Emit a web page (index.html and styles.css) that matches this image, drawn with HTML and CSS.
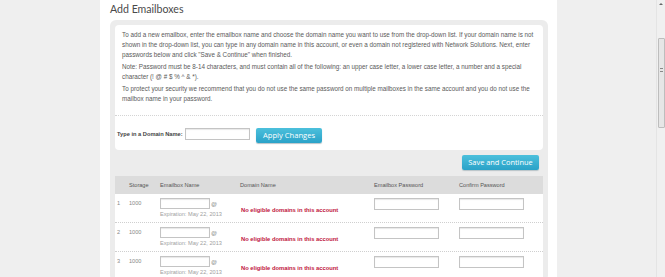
FILE: index.html
```html
<!DOCTYPE html>
<html>
<head>
<meta charset="utf-8">
<link rel="stylesheet" href="styles.css">
</head>
<body>
<div class="page">
  <div class="side-left"></div>
  <div class="main">
    <h1 class="title">Add Emailboxes</h1>
    <div class="panel">
      <div class="box">
        <p class="para">To add a new emailbox, enter the emailbox name and choose the domain name you want to use from the drop-down list. If your domain name is not shown in the drop-down list, you can type in any domain name in this account, or even a domain not registered with Network Solutions. Next, enter passwords below and click "Save &amp; Continue" when finished.</p>
        <p class="para">Note: Password must be 8-14 characters, and must contain all of the following: an upper case letter, a lower case letter, a number and a special character (! @ # $ % ^ &amp; *).</p>
        <p class="para">To protect your security we recommend that you do not use the same password on multiple mailboxes in the same account and you do not use the mailbox name in your password.</p>
        <div class="domain-row">
          <span class="domain-label">Type in a Domain Name:</span>
          <span class="field field-domain"></span>
          <span class="btn btn-apply">Apply Changes</span>
        </div>
      </div>
      <div class="actions">
        <span class="btn btn-save">Save and Continue</span>
      </div>
      <div class="table">
        <div class="thead">
          <span></span>
          <span>Storage</span>
          <span>Emailbox Name</span>
          <span>Domain Name</span>
          <span>Emailbox Password</span>
          <span>Confirm Password</span>
        </div>
        <div class="trow">
          <span class="num">1</span>
          <span class="num">1000</span>
          <div class="namecell"><div class="nameline"><span class="field field-name"></span><span class="at">@</span></div><span class="exp">Expiration: May 22, 2013</span></div>
          <span class="nodomain">No eligible domains in this account</span>
          <span class="field field-pw"></span>
          <span class="field field-pw"></span>
        </div>
        <div class="trow">
          <span class="num">2</span>
          <span class="num">1000</span>
          <div class="namecell"><div class="nameline"><span class="field field-name"></span><span class="at">@</span></div><span class="exp">Expiration: May 22, 2013</span></div>
          <span class="nodomain">No eligible domains in this account</span>
          <span class="field field-pw"></span>
          <span class="field field-pw"></span>
        </div>
        <div class="trow">
          <span class="num">3</span>
          <span class="num">1000</span>
          <div class="namecell"><div class="nameline"><span class="field field-name"></span><span class="at">@</span></div><span class="exp">Expiration: May 22, 2013</span></div>
          <span class="nodomain">No eligible domains in this account</span>
          <span class="field field-pw"></span>
          <span class="field field-pw"></span>
        </div>
      </div>
    </div>
  </div>
  <div class="side-right"></div>
  <div class="scrollbar">
    <div class="arrow"></div>
    <div class="thumb"><div class="grip"></div></div>
  </div>
</div>
</body>
</html>
```

FILE: styles.css
```css
* { box-sizing: border-box; }
html, body { margin: 0; padding: 0; }
body {
  font-family: "Liberation Sans", Arial, sans-serif;
  color: #555;
  overflow: hidden;
}
.page {
  display: flex;
  width: 665px;
  height: 277px;
  background: #efefef;
}
.side-left { width: 100px; background: #efefef; }
.main {
  width: 457px;
  background: #fff;
  padding: 0 9px 0 10px;
}
.side-right { flex: 1; background: #efefef; }
.scrollbar {
  width: 9px;
  background: #f0f0f0;
  border-left: 1px solid #e4e4e4;
  display: flex;
  flex-direction: column;
  align-items: center;
}
.arrow {
  margin-top: 3px;
  width: 0; height: 0;
  border-left: 2px solid transparent;
  border-right: 2px solid transparent;
  border-bottom: 2px solid #666;
}
.thumb {
  margin-top: 33px;
  width: 7px;
  height: 90px;
  background: #e6e6e6;
  border: 1px solid #bdbdbd;
  border-radius: 1px;
  display: flex;
  justify-content: center;
  padding-top: 29px;
}
.grip {
  width: 3px; height: 4px;
  border-top: 1px solid #888;
  border-bottom: 1px solid #888;
}
.title {
  margin: 0;
  padding: 2px 0 0 0;
  height: 20px;
  font-family: Lato, "Open Sans", sans-serif;
  font-weight: normal;
  font-size: 10.6px;
  line-height: 14px;
  color: #4a4a4a;
}
.panel {
  background: #ececec;
  border-radius: 6px;
  padding: 5px 5px 0 5px;
}
.box {
  background: #fff;
  border-radius: 4px;
  padding: 5px 0 0 0;
  height: 125px;
}
.para {
  margin: 0 0 1.5px 0;
  padding: 0 9px 0 7px;
  font-size: 6.3px;
  line-height: 10.2px;
  color: #5a5a5a;
}
.domain-row {
  margin-top: 11px;
  border-top: 1px dotted #d4d4d4;
  display: flex;
  align-items: center;
  padding: 9px 0 0 2px;
}
.domain-label {
  font-size: 5.7px;
  font-weight: bold;
  color: #444;
  width: 68px;
  white-space: nowrap;
  flex-shrink: 0;
}
.field {
  display: inline-block;
  height: 12px;
  background: #fff;
  border: 1px solid #c4c4c4;
  box-shadow: inset 0 1px 1px #e8e8e8;
}
.field-domain { width: 65px; }
.btn {
  display: inline-block;
  background: linear-gradient(#4cc0dc, #2aa2c8);
  color: #fff;
  font-family: "Open Sans", "DejaVu Sans", sans-serif;
  border-radius: 2px;
  text-align: center;
  box-shadow: 0 1px 1px #b8c4c8;
}
.btn-apply {
  margin-left: 6px;
  margin-top: 3px;
  width: 66px;
  height: 15px;
  font-size: 7.6px;
  line-height: 15px;
}
.actions {
  display: flex;
  justify-content: flex-end;
  padding: 5px 4px 5px 0;
  height: 26px;
}
.btn-save {
  width: 77px;
  height: 15px;
  font-size: 7.4px;
  line-height: 15px;
}
.table { background: #fff; }
.thead, .trow {
  display: grid;
  grid-template-columns: 12px 31px 80px 134px 85px 1fr;
  padding-left: 2px;
}
.thead {
  background: #dcdcdc;
  height: 18px;
  align-items: center;
  font-size: 5.6px;
  color: #555;
}
.trow {
  height: 29px;
  border-bottom: 1px dotted #cfcfcf;
  align-items: start;
  padding-top: 4px;
  font-size: 5.6px;
}
.num { color: #888; padding-top: 2px; }
.namecell { display: flex; flex-direction: column; }
.nameline { display: flex; align-items: center; }
.field-name { width: 50px; height: 11px; }
.at { color: #888; font-size: 6px; margin-left: 1px; }
.exp { color: #a0a0a0; margin-top: 2px; }
.nodomain {
  color: #c0143c;
  font-weight: bold;
  padding: 9px 0 0 1px;
  font-size: 5.8px;
}
.field-pw { width: 65px; height: 12px; }
```
